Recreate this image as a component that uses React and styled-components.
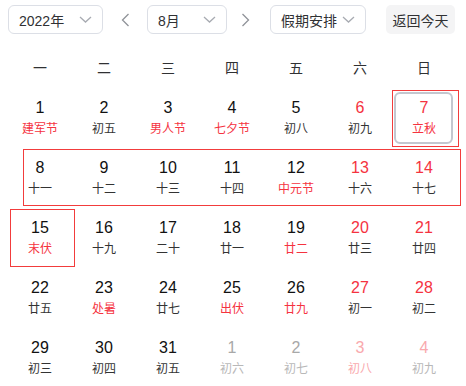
import React from 'react';
import styled, { createGlobalStyle, css } from 'styled-components';

const Global = createGlobalStyle`
  html, body { margin: 0; padding: 0; background: #fff; }
  body { font-family: "Liberation Sans", "Noto Sans CJK SC", sans-serif; }
`;

const Page = styled.div`
  width: 466px;
  box-sizing: border-box;
  padding: 5px 0 0 8px;
`;

const Toolbar = styled.div`
  display: flex;
  align-items: center;
  height: 29px;
`;

const Select = styled.div`
  width: ${(p) => p.$w}px;
  height: 29px;
  box-sizing: border-box;
  border: 1px solid #dcdfe6;
  border-radius: 6px;
  display: flex;
  align-items: center;
  justify-content: space-between;
  padding: 0 10px;
  font-family: "Liberation Sans", "Noto Sans CJK SC", sans-serif;
  font-size: 14px;
  color: #303133;
`;

const Nav = styled.div`
  width: ${(p) => p.$w}px;
  height: 29px;
  display: flex;
  align-items: center;
  justify-content: center;
  padding-right: ${(p) => p.$pr || 0}px;
  box-sizing: border-box;
`;

const TodayButton = styled.div`
  margin-left: 20px;
  width: 69px;
  height: 29px;
  border-radius: 5px;
  background: #f4f4f5;
  display: flex;
  align-items: center;
  justify-content: center;
  font-size: 14px;
  color: #303133;
`;

const Grid = styled.div`
  display: grid;
  grid-template-columns: repeat(7, 64px);
`;

const Header = styled(Grid)`
  margin-top: 13px;
  height: 40px;
  align-items: center;
  justify-items: center;
  font-size: 14px;
  color: #303133;
`;

const WeekRow = styled(Grid)`
  position: relative;
  height: 60px;
  ${(p) =>
    p.$active &&
    css`
      &::after {
        content: '';
        position: absolute;
        left: 15px;
        right: 5px;
        top: 2px;
        bottom: 1px;
        border: 1px solid #f23c3c;
        pointer-events: none;
      }
    `}
`;

const Cell = styled.div`
  position: relative;
  display: flex;
  flex-direction: column;
  align-items: center;
  justify-content: center;
  ${(p) =>
    p.$selected &&
    css`
      &::after {
        content: '';
        position: absolute;
        left: 2px;
        right: -3px;
        top: 2px;
        bottom: 0;
        border: 1px solid #f23c3c;
      }
    `}
  ${(p) =>
    p.$today &&
    css`
      &::before {
        content: '';
        position: absolute;
        left: 2px;
        right: 3px;
        top: 5px;
        bottom: 3px;
        border: 2px solid #c4c7cf;
        border-radius: 6px;
      }
      &::after {
        content: '';
        position: absolute;
        left: 0;
        right: -3px;
        top: 3px;
        bottom: 0;
        border: 1px solid #f23c3c;
      }
    `}
`;

const numColors = {
  normal: '#111111',
  red: '#f5333f',
  fade: '#a8a8a8',
  fadeRed: '#f9a9ad',
};
const lunarColors = {
  normal: '#333333',
  red: '#f5333f',
  fade: '#b8b8b8',
  fadeRed: '#f9a9ad',
};

const DayNum = styled.div`
  font-family: "Liberation Sans", Arial, sans-serif;
  font-size: 16px;
  line-height: 22px;
  color: ${(p) => numColors[p.$tone]};
`;

const Lunar = styled.div`
  font-family: "Noto Sans CJK SC", sans-serif;
  font-size: 12px;
  line-height: 18px;
  color: ${(p) => lunarColors[p.$tone]};
`;

const Chevron = () => (
  <svg width="13" height="7" viewBox="0 0 13 7">
    <polyline points="1,1 6.5,6 12,1" fill="none" stroke="#a8abb2" strokeWidth="1.3" />
  </svg>
);

const Arrow = ({ dir }) => (
  <svg width="9" height="14" viewBox="0 0 9 14">
    <polyline
      points={dir === 'left' ? '7.5,1 1.5,7 7.5,13' : '1.5,1 7.5,7 1.5,13'}
      fill="none"
      stroke="#909399"
      strokeWidth="1.3"
    />
  </svg>
);

const d = (n, l, nt = 'normal', lt = 'normal', extra = {}) => ({ n, l, nt, lt, ...extra });

const weeks = [
  [
    d(1, '建军节', 'normal', 'red'),
    d(2, '初五'),
    d(3, '男人节', 'normal', 'red'),
    d(4, '七夕节', 'normal', 'red'),
    d(5, '初八'),
    d(6, '初九', 'red'),
    d(7, '立秋', 'red', 'red', { today: true }),
  ],
  [
    d(8, '十一'),
    d(9, '十二'),
    d(10, '十三'),
    d(11, '十四'),
    d(12, '中元节', 'normal', 'red'),
    d(13, '十六', 'red'),
    d(14, '十七', 'red'),
  ],
  [
    d(15, '末伏', 'normal', 'red', { selected: true }),
    d(16, '十九'),
    d(17, '二十'),
    d(18, '廿一'),
    d(19, '廿二', 'normal', 'red'),
    d(20, '廿三', 'red'),
    d(21, '廿四', 'red'),
  ],
  [
    d(22, '廿五'),
    d(23, '处暑', 'normal', 'red'),
    d(24, '廿七'),
    d(25, '出伏', 'normal', 'red'),
    d(26, '廿九', 'normal', 'red'),
    d(27, '初一', 'red'),
    d(28, '初二', 'red'),
  ],
  [
    d(29, '初三'),
    d(30, '初四'),
    d(31, '初五'),
    d(1, '初六', 'fade', 'fade'),
    d(2, '初七', 'fade', 'fade'),
    d(3, '初八', 'fadeRed', 'fadeRed'),
    d(4, '初九', 'fadeRed', 'fade'),
  ],
];

const weekdays = ['一', '二', '三', '四', '五', '六', '日'];

export default function App() {
  return (
    <>
      <Global />
      <Page>
        <Toolbar>
          <Select $w={95}>
            <span>2022年</span>
            <Chevron />
          </Select>
          <Nav $w={44}>
            <Arrow dir="left" />
          </Nav>
          <Select $w={80}>
            <span>8月</span>
            <Chevron />
          </Select>
          <Nav $w={43} $pr={6}>
            <Arrow dir="right" />
          </Nav>
          <Select $w={96}>
            <span>假期安排</span>
            <Chevron />
          </Select>
          <TodayButton>返回今天</TodayButton>
        </Toolbar>
        <Header>
          {weekdays.map((w) => (
            <span key={w}>{w}</span>
          ))}
        </Header>
        {weeks.map((week, i) => (
          <WeekRow key={i} $active={i === 1}>
            {week.map((day, j) => (
              <Cell key={j} $today={day.today} $selected={day.selected}>
                <DayNum $tone={day.nt}>{day.n}</DayNum>
                <Lunar $tone={day.lt}>{day.l}</Lunar>
              </Cell>
            ))}
          </WeekRow>
        ))}
      </Page>
    </>
  );
}
